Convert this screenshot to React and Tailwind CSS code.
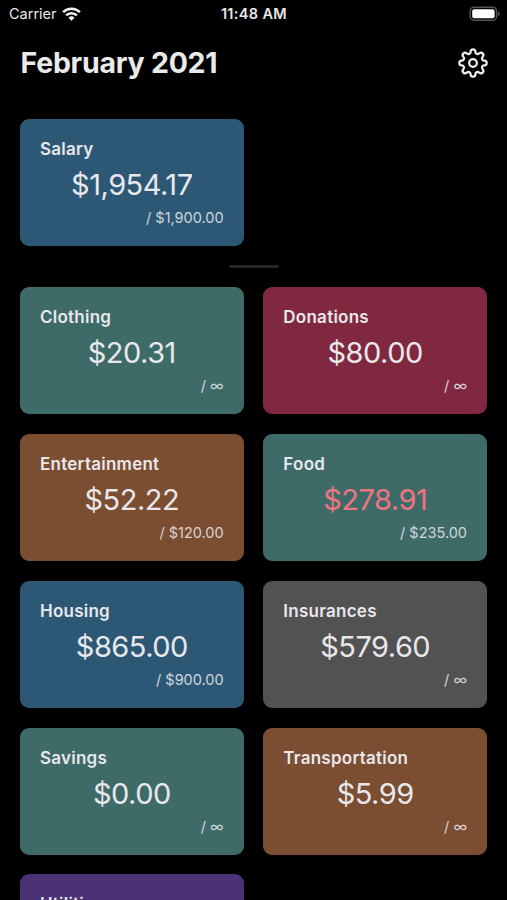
const income = [
    { name: "Salary", amount: "$1,954.17", limit: "$1,900.00", bg: "bg-[#2c5876]" }
];

const expenses = [
    { name: "Clothing", amount: "$20.31", limit: "∞", bg: "bg-[#3e6b67]" },
    { name: "Donations", amount: "$80.00", limit: "∞", bg: "bg-[#802840]" },
    { name: "Entertainment", amount: "$52.22", limit: "$120.00", bg: "bg-[#7b4d31]" },
    { name: "Food", amount: "$278.91", limit: "$235.00", bg: "bg-[#3e6b67]", over: true },
    { name: "Housing", amount: "$865.00", limit: "$900.00", bg: "bg-[#2c5876]" },
    { name: "Insurances", amount: "$579.60", limit: "∞", bg: "bg-[#525252]" },
    { name: "Savings", amount: "$0.00", limit: "∞", bg: "bg-[#3e6b67]" },
    { name: "Transportation", amount: "$5.99", limit: "∞", bg: "bg-[#7b4d31]" },
    { name: "Utilities", bg: "bg-[#4a3275]" }
];

// Outline of an eight-toothed gear centred on 0,0: a convex arc per tooth, a concave arc per gap
const gearPath = () => {
    const point = (deg) => {
        const a = (deg * Math.PI) / 180;
        return `${(10.8 * Math.cos(a)).toFixed(2)} ${(10.8 * Math.sin(a)).toFixed(2)}`;
    };
    let d = `M${point(-12)}`;
    for (let i = 0; i < 8; i++) {
        d += `A2.25 2.25 0 0 1 ${point(i * 45 + 12)}A2.1 2.1 0 0 0 ${point(i * 45 + 33)}`;
    }
    return d + "z";
};

function GearIcon() {
    return (
        <svg className="h-[32px] w-[32px]" viewBox="-15 -15 30 30" fill="none" stroke="#eeeeee" strokeWidth="2.1" strokeLinejoin="round">
            <path d={gearPath()} />
            <circle r="3.6" />
        </svg>
    );
}

function WifiIcon() {
    return (
        <svg className="ml-[5px] h-[14px] w-[19px]" viewBox="0 0 19 14" fill="none" stroke="#f4f4f4" strokeWidth="2.5">
            <path d="M1.1 5.1a12 12 0 0 1 16.8 0" />
            <path d="M4.1 8.4a7.7 7.7 0 0 1 10.8 0" />
            <path d="M6.5 10.7a4.3 4.3 0 0 1 6 0l-3 3z" fill="#f4f4f4" stroke="none" />
        </svg>
    );
}

function BatteryIcon() {
    return (
        <svg className="h-[16px] w-[32px]" viewBox="0 0 32 16" fill="none">
            <rect x="1.2" y="1.2" width="26.4" height="13" rx="4" stroke="#555" strokeWidth="1.5" />
            <rect x="3.2" y="3.2" width="22.4" height="9" rx="2" fill="#fff" />
            <path d="M29.2 5.6c2 .8 2 3.6 0 4.4z" fill="#666" />
        </svg>
    );
}

function StatusBar() {
    return (
        <div className="grid h-[28px] grid-cols-3 items-center pl-[9px] pr-[6px] text-[#e8e8e8]">
            <div className="flex items-center text-[14.5px]">
                Carrier
                <WifiIcon />
            </div>
            <div className="pr-[2px] text-center text-[14.5px] font-semibold tracking-[0.35px]">11:48 AM</div>
            <div className="flex justify-end">
                <BatteryIcon />
            </div>
        </div>
    );
}

function BudgetCard({ item }) {
    return (
        <div className={`flex h-[127px] flex-col rounded-[9px] px-[20px] pt-[19px] text-[#e8e8ec] ${item.bg}`}>
            <h2 className="text-[17px] font-semibold leading-[22px] tracking-[0.25px]">{item.name}</h2>
            {item.amount && (
                <>
                    <p className={`mt-[5px] text-center text-[29px] leading-[40px] tracking-[-0.5px] ${item.over ? "text-[#ee7482]" : ""}`}>
                        {item.amount}
                    </p>
                    <p className="mt-[3px] text-right text-[14.5px] leading-[20px] opacity-85">/ {item.limit}</p>
                </>
            )}
        </div>
    );
}

function App() {
    return (
        <div className="h-[900px] w-[507px] overflow-hidden bg-black font-['Inter',sans-serif]">
            <StatusBar />

            <header className="flex h-[70px] items-center justify-between pl-[20.5px] pr-[18px]">
                <h1 className="text-[28.5px] font-bold tracking-[-0.25px] text-[#eaeaea]">February 2021</h1>
                <GearIcon />
            </header>

            <div className="mt-[21.3px] grid grid-cols-2 gap-[19.7px] px-[20px]">
                {income.map((item) => (
                    <BudgetCard key={item.name} item={item} />
                ))}
            </div>

            {/* Divider between income and expenses */}
            <div className="mx-auto mt-[19px] h-[3px] w-[50px] rounded-full bg-[#262626]"></div>

            <div className="mt-[19.2px] grid grid-cols-2 gap-[19.7px] px-[20px]">
                {expenses.map((item) => (
                    <BudgetCard key={item.name} item={item} />
                ))}
            </div>
        </div>
    );
}

export default App;
